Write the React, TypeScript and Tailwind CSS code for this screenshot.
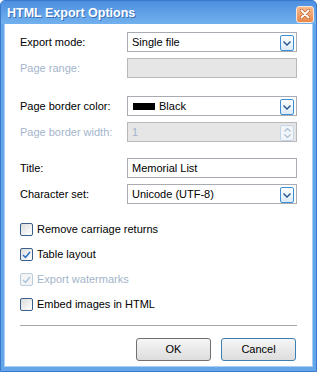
import React from "react";

const font = "font-['Liberation_Sans',Arial,sans-serif]";

function DropBtn({ disabled = false }: { disabled?: boolean }) {
  return (
    <div
      className={`absolute right-[2px] top-[2px] w-[14px] h-[16px] rounded-[2px] border flex items-center justify-center ${
        disabled
          ? "border-[#c4d6e8] bg-[#f2f5f8]"
          : "border-[#3d8fd6] bg-gradient-to-b from-[#ffffff] to-[#dceaf7]"
      }`}
    >
      <svg width="8" height="5" viewBox="0 0 8 5">
        <path d="M0.5 0.5 L4 4 L7.5 0.5" fill="none" stroke={disabled ? "#a9bfd6" : "#1e4f8a"} strokeWidth="1.3" />
      </svg>
    </div>
  );
}

function Label({ children, disabled = false }: { children: React.ReactNode; disabled?: boolean }) {
  return (
    <div className={`w-[107px] text-[11px] leading-none ${disabled ? "text-[#a3b5cb]" : "text-black"}`}>{children}</div>
  );
}

function Row({ label, disabled, children, className = "" }: { label: string; disabled?: boolean; children: React.ReactNode; className?: string }) {
  return (
    <div className={`flex items-center h-[20px] ${className}`}>
      <Label disabled={disabled}>{label}</Label>
      {children}
    </div>
  );
}

function Box({ children, disabled = false, drop = false }: { children?: React.ReactNode; disabled?: boolean; drop?: boolean }) {
  return (
    <div
      className={`relative w-[170px] h-[20px] border flex items-center pl-[4px] text-[11px] ${
        disabled ? "border-[#b8b8b8] bg-[#e6e6e6] text-[#a3b5cb]" : "border-[#a8acb2] bg-white text-black"
      }`}
    >
      {children}
      {drop && <DropBtn />}
    </div>
  );
}

function Check({ checked = false, disabled = false, label }: { checked?: boolean; disabled?: boolean; label: string }) {
  return (
    <div className="flex items-center h-[25px]">
      <div
        className={`w-[13px] h-[13px] rounded-[2px] border flex items-center justify-center ${
          disabled
            ? "border-[#b9cde0] bg-[#f4f4f4]"
            : "border-[#3a5f88] bg-gradient-to-br from-[#dcdcdc] to-[#ffffff]"
        }`}
      >
        {checked && (
          <svg width="9" height="8" viewBox="0 0 9 8">
            <path d="M1 4 L3.5 6.5 L8 1" fill="none" stroke={disabled ? "#a8c4e0" : "#2a6fc4"} strokeWidth="1.5" />
          </svg>
        )}
      </div>
      <span className={`ml-[4px] text-[11px] leading-none ${disabled ? "text-[#a3b5cb]" : "text-black"}`}>{label}</span>
    </div>
  );
}

export default function App() {
  return (
    <div className={`${font} w-[317px] h-[372px] bg-[#65a6ea] border border-[#3a78cc] flex flex-col rounded-t-[5px] overflow-hidden`}>
      <div className="h-[23px] shrink-0 flex items-center justify-between pl-[6px] pr-[2px] bg-gradient-to-b from-[#4d8fe0] to-[#72b1ee]">
        <span className="text-white font-bold text-[12.5px] leading-none mt-[1px] [text-shadow:1px_1px_0_#3a6fb8]">HTML Export Options</span>
        <div className="w-[18px] h-[17px] rounded-[3px] border border-[#fbe5d4] bg-gradient-to-b from-[#f6b98c] to-[#e98a4c] flex items-center justify-center mt-[3px]">
          <svg width="10" height="10" viewBox="0 0 10 10">
            <path d="M1.5 1.5 L8.5 8.5 M8.5 1.5 L1.5 8.5" stroke="#c0642c" strokeWidth="3.2" strokeLinecap="round" />
            <path d="M1.5 1.5 L8.5 8.5 M8.5 1.5 L1.5 8.5" stroke="#ffffff" strokeWidth="1.8" strokeLinecap="round" />
          </svg>
        </div>
      </div>
      <div className="flex-1 mx-[3px] mb-[4px] bg-white border-l border-r border-b border-[#a9cdf3] px-[15px] pt-[8px] flex flex-col">
        <div className="flex flex-col gap-[6px]">
          <Row label="Export mode:">
            <Box drop>Single file</Box>
          </Row>
          <Row label="Page range:" disabled>
            <Box disabled />
          </Row>
        </div>
        <div className="flex flex-col gap-[6px] mt-[18px]">
          <Row label="Page border color:">
            <Box drop>
              <span className="w-[22px] h-[7px] bg-black mr-[4px] ml-[1px]" />
              Black
            </Box>
          </Row>
          <Row label="Page border width:" disabled>
            <Box disabled>
              1
              <div className="absolute right-[2px] top-[2px] w-[14px] h-[16px] rounded-[2px] border border-[#c4d6e8] bg-[#f2f5f8] flex flex-col items-center justify-center gap-[2px]">
                <svg width="7" height="4" viewBox="0 0 7 4">
                  <path d="M0.5 3.5 L3.5 0.5 L6.5 3.5" fill="none" stroke="#a9bfd6" strokeWidth="1.1" />
                </svg>
                <svg width="7" height="4" viewBox="0 0 7 4">
                  <path d="M0.5 0.5 L3.5 3.5 L6.5 0.5" fill="none" stroke="#a9bfd6" strokeWidth="1.1" />
                </svg>
              </div>
            </Box>
          </Row>
        </div>
        <div className="flex flex-col gap-[6px] mt-[16px]">
          <Row label="Title:">
            <Box>Memorial List</Box>
          </Row>
          <Row label="Character set:">
            <Box drop>Unicode (UTF-8)</Box>
          </Row>
        </div>
        <div className="flex flex-col mt-[13px]">
          <Check label="Remove carriage returns" />
          <Check label="Table layout" checked />
          <Check label="Export watermarks" checked disabled />
          <Check label="Embed images in HTML" />
        </div>
        <div className="h-px bg-[#a8a8a8] mt-[8px] mb-[12px]" />
        <div className="flex justify-end gap-[10px] pr-[1px]">
          <button className="w-[75px] h-[23px] rounded-[3px] border border-[#707070] bg-gradient-to-b from-[#f6f6f6] to-[#dddddd] text-[11px] text-black">OK</button>
          <button className="w-[75px] h-[23px] rounded-[3px] border border-[#3c7fb1] bg-gradient-to-b from-[#f6f6f6] to-[#dddddd] text-[11px] text-black">Cancel</button>
        </div>
      </div>
    </div>
  );
}
